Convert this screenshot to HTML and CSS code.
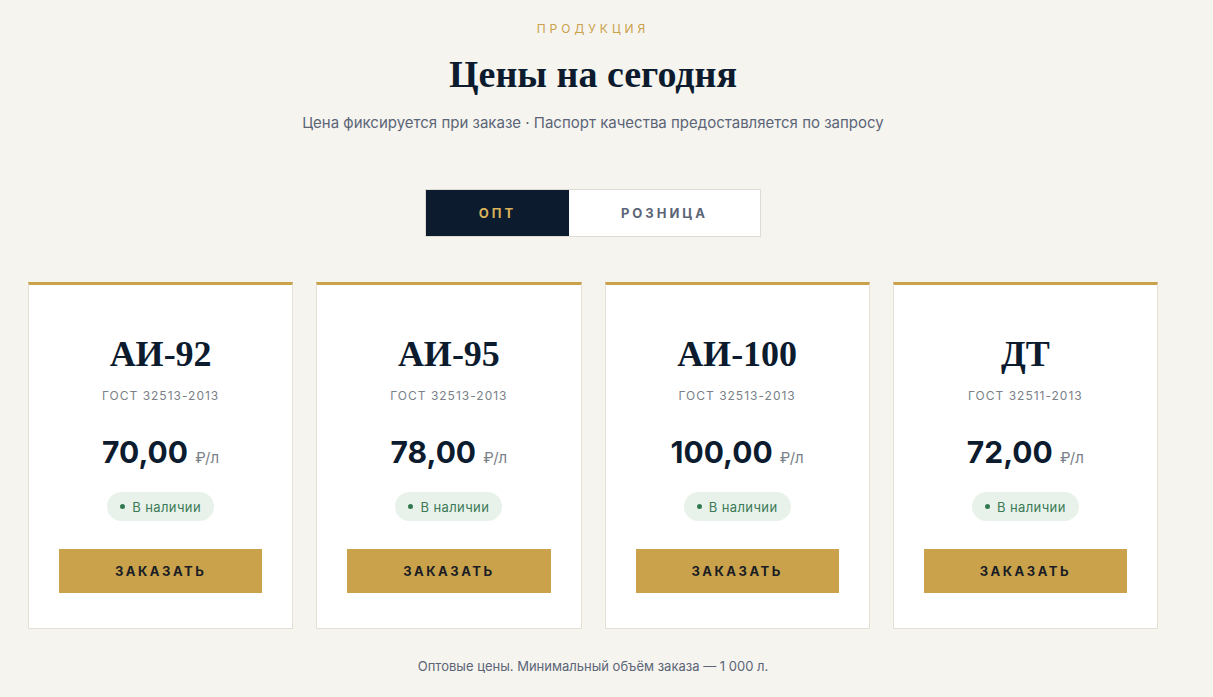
FILE: index.html
```html
<!DOCTYPE html>
<html lang="ru">
<head>
    <meta charset="UTF-8">
    <meta name="viewport" content="width=device-width, initial-scale=1.0">
    <title>Цены на сегодня</title>
    <link rel="stylesheet" href="styles.css">
</head>
<body>
    <section class="prices">
        <div class="eyebrow">Продукция</div>
        <h1>Цены на сегодня</h1>
        <p class="lead">Цена фиксируется при заказе · Паспорт качества предоставляется по запросу</p>

        <div class="tabs">
            <button class="tab active">Опт</button>
            <button class="tab">Розница</button>
        </div>

        <div class="cards">
            <div class="card">
                <h2>АИ-92</h2>
                <div class="gost">ГОСТ 32513-2013</div>
                <div class="price">70,00 <span class="unit">₽/л</span></div>
                <div class="stock"><span class="dot"></span>В наличии</div>
                <button class="order">Заказать</button>
            </div>
            <div class="card">
                <h2>АИ-95</h2>
                <div class="gost">ГОСТ 32513-2013</div>
                <div class="price">78,00 <span class="unit">₽/л</span></div>
                <div class="stock"><span class="dot"></span>В наличии</div>
                <button class="order">Заказать</button>
            </div>
            <div class="card">
                <h2>АИ-100</h2>
                <div class="gost">ГОСТ 32513-2013</div>
                <div class="price">100,00 <span class="unit">₽/л</span></div>
                <div class="stock"><span class="dot"></span>В наличии</div>
                <button class="order">Заказать</button>
            </div>
            <div class="card">
                <h2>ДТ</h2>
                <div class="gost">ГОСТ 32511-2013</div>
                <div class="price">72,00 <span class="unit">₽/л</span></div>
                <div class="stock"><span class="dot"></span>В наличии</div>
                <button class="order">Заказать</button>
            </div>
        </div>

        <p class="note">Оптовые цены. Минимальный объём заказа — 1 000 л.</p>
    </section>
</body>
</html>
```

FILE: styles.css
```css
body {
    margin: 0;
    font-family: Inter, 'Noto Sans', sans-serif;
    color: #0c1b2e;
    background-color: #f6f4ef;
}
.prices {
    width: 1130px;
    margin-left: 28px;
    padding-top: 21px;
    text-align: center;
}
.eyebrow {
    font-size: 12px;
    line-height: 16px;
    letter-spacing: 4px;
    text-transform: uppercase;
    color: #c9a24b;
}
h1 {
    margin: 13px 0 0;
    font-family: 'Liberation Serif', 'DejaVu Serif', serif;
    font-size: 38px;
    line-height: 48px;
    font-weight: bold;
}
.lead {
    margin: 15px 0 0;
    font-size: 15px;
    line-height: 20px;
    color: #5b6577;
}
.tabs {
    display: inline-flex;
    margin-top: 56px;
    border: 1px solid #dedbd4;
    background-color: white;
}
.tab {
    height: 46px;
    border: none;
    background: none;
    font-family: inherit;
    font-size: 13px;
    font-weight: 700;
    letter-spacing: 3px;
    text-transform: uppercase;
    color: #5b6577;
    cursor: pointer;
}
.tab:first-child {
    width: 143px;
}
.tab:last-child {
    width: 191px;
}
.tab.active {
    background-color: #0c1b2e;
    color: #d9b15a;
}
.cards {
    display: grid;
    grid-template-columns: repeat(4, 1fr);
    gap: 23px;
    margin-top: 45px;
}
.card {
    display: flex;
    flex-direction: column;
    align-items: center;
    padding: 47px 30px 35px;
    background-color: white;
    border: 1px solid #e4e0d6;
    border-top: 3px solid #c9a24b;
}
.card h2 {
    margin: 0;
    font-family: 'Liberation Serif', 'DejaVu Serif', serif;
    font-size: 36px;
    line-height: 44px;
    font-weight: bold;
}
.gost {
    margin-top: 12px;
    font-size: 12px;
    line-height: 16px;
    letter-spacing: 1px;
    color: #7a7f88;
}
.price {
    margin-top: 30px;
    font-size: 30px;
    line-height: 36px;
    font-weight: 700;
}
.unit {
    font-size: 15px;
    font-weight: 400;
    color: #7a7f88;
}
.stock {
    display: inline-flex;
    align-items: center;
    gap: 7px;
    margin-top: 16px;
    height: 29px;
    padding: 0 13px;
    border-radius: 15px;
    background-color: #e8f2ea;
    font-size: 13px;
    letter-spacing: 0.4px;
    color: #3b7a56;
}
.dot {
    width: 5px;
    height: 5px;
    border-radius: 50%;
    background-color: #2f7a4f;
}
.order {
    width: 100%;
    height: 44px;
    margin-top: 28px;
    border: none;
    background-color: #c9a24b;
    font-family: inherit;
    font-size: 13px;
    font-weight: 700;
    letter-spacing: 2.5px;
    text-transform: uppercase;
    color: #1a1d24;
    cursor: pointer;
}
.note {
    margin: 28px 0 0;
    font-size: 13px;
    line-height: 18px;
    color: #5b6577;
}
```
